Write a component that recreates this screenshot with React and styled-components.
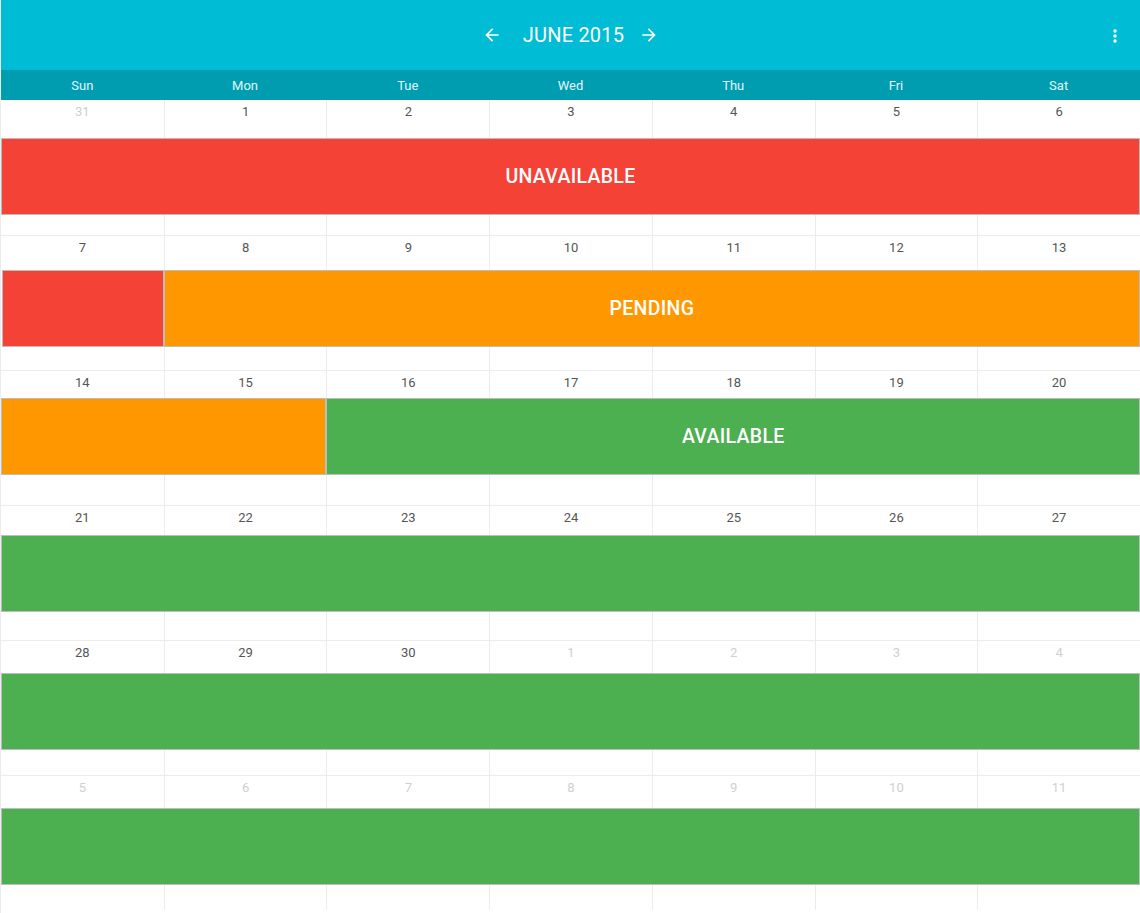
import React from "react";
import styled, { createGlobalStyle } from "styled-components";

const Global = createGlobalStyle`
  html, body { margin: 0; padding: 0; background: #fff; overflow: hidden; }
  body { font-family: Roboto, "Noto Sans", Arial, sans-serif; }
`;

const Page = styled.div`
  width: 1140px;
  height: 913px;
  box-sizing: border-box;
  border-left: 1px solid #ececec;
  overflow: hidden;
`;

const Toolbar = styled.header`
  height: 70px;
  background: #00bcd4;
  display: flex;
  align-items: center;
  justify-content: center;
  position: relative;
  color: #fff;
`;

const NavButton = styled.button`
  background: none;
  border: 0;
  padding: 0;
  width: 20px;
  height: 24px;
  display: flex;
  align-items: center;
  justify-content: center;
  color: #fff;
  cursor: pointer;
`;

const Title = styled.h1`
  margin: 0 15px 0 21px;
  font-size: 20px;
  font-weight: 400;
  letter-spacing: 0.2px;
  line-height: 24px;
`;

const MenuButton = styled(NavButton)`
  position: absolute;
  right: 13px;
  top: 24px;
  width: 24px;
`;

const DayHeader = styled.div`
  height: 30px;
  background: #009db1;
  display: grid;
  grid-template-columns: repeat(7, 1fr);
  align-items: center;
`;

const DayName = styled.div`
  text-align: center;
  color: #e0f7fa;
  font-size: 13px;
  padding-top: 1px;
`;

const Week = styled.div`
  position: relative;
  height: 135px;
  box-sizing: border-box;
  border-top: ${(p) => (p.$first ? "0" : "1px solid #ececec")};
  display: grid;
  grid-template-columns: repeat(7, 1fr);
`;

const DayCell = styled.div`
  border-left: ${(p) => (p.$first ? "0" : "1px solid #ececec")};
  text-align: center;
  font-size: 13px;
  line-height: 16px;
  padding-top: 4px;
  color: ${(p) => (p.$muted ? "#cfcfcf" : "#555")};
`;

const BandLayer = styled.div`
  position: absolute;
  left: 0;
  right: 0;
  top: ${(p) => p.$top}px;
  height: 77px;
  display: grid;
  grid-template-columns: repeat(7, 1fr);
`;

const Band = styled.div`
  grid-column: ${(p) => p.$start} / span ${(p) => p.$span};
  background: ${(p) => p.$color};
  border: 1px solid #bdbdbd;
  box-sizing: border-box;
  margin-left: ${(p) => p.$inset}px;
  display: flex;
  align-items: center;
  justify-content: center;
  color: #fff;
  font-size: 19.5px;
  font-weight: 500;
  letter-spacing: 0.3px;
`;

const RED = "#f44336";
const ORANGE = "#ff9800";
const GREEN = "#4caf50";

const days = ["Sun", "Mon", "Tue", "Wed", "Thu", "Fri", "Sat"];

const weeks = [
  {
    dates: [31, 1, 2, 3, 4, 5, 6],
    muted: [0],
    top: 38,
    bands: [{ start: 1, span: 7, color: RED, label: "UNAVAILABLE", inset: 0 }],
  },
  {
    dates: [7, 8, 9, 10, 11, 12, 13],
    muted: [],
    top: 34,
    bands: [
      { start: 1, span: 1, color: RED, label: "", inset: 1 },
      { start: 2, span: 6, color: ORANGE, label: "PENDING", inset: 0 },
    ],
  },
  {
    dates: [14, 15, 16, 17, 18, 19, 20],
    muted: [],
    top: 27,
    bands: [
      { start: 1, span: 2, color: ORANGE, label: "", inset: 0 },
      { start: 3, span: 5, color: GREEN, label: "AVAILABLE", inset: 0 },
    ],
  },
  {
    dates: [21, 22, 23, 24, 25, 26, 27],
    muted: [],
    top: 29,
    bands: [{ start: 1, span: 7, color: GREEN, label: "", inset: 0 }],
  },
  {
    dates: [28, 29, 30, 1, 2, 3, 4],
    muted: [3, 4, 5, 6],
    top: 32,
    bands: [{ start: 1, span: 7, color: GREEN, label: "", inset: 0 }],
  },
  {
    dates: [5, 6, 7, 8, 9, 10, 11],
    muted: [0, 1, 2, 3, 4, 5, 6],
    top: 32,
    bands: [{ start: 1, span: 7, color: GREEN, label: "", inset: 0 }],
  },
];

const ArrowLeft = () => (
  <svg width="20" height="20" viewBox="0 0 24 24" fill="#fff">
    <path d="M20 11H7.83l5.59-5.59L12 4l-8 8 8 8 1.41-1.41L7.83 13H20v-2z" />
  </svg>
);

const ArrowRight = () => (
  <svg width="20" height="20" viewBox="0 0 24 24" fill="#fff">
    <path d="M12 4l-1.41 1.41L16.17 11H4v2h12.17l-5.58 5.59L12 20l8-8z" />
  </svg>
);

const MoreVert = () => (
  <svg width="24" height="24" viewBox="0 0 24 24" fill="#fff">
    <circle cx="12" cy="7" r="1.7" />
    <circle cx="12" cy="12" r="1.7" />
    <circle cx="12" cy="17" r="1.7" />
  </svg>
);

export default function App() {
  return (
    <>
      <Global />
      <Page>
        <Toolbar>
          <NavButton aria-label="previous">
            <ArrowLeft />
          </NavButton>
          <Title>JUNE 2015</Title>
          <NavButton aria-label="next">
            <ArrowRight />
          </NavButton>
          <MenuButton aria-label="menu">
            <MoreVert />
          </MenuButton>
        </Toolbar>
        <DayHeader>
          {days.map((d) => (
            <DayName key={d}>{d}</DayName>
          ))}
        </DayHeader>
        {weeks.map((w, wi) => (
          <Week key={wi} $first={wi === 0}>
            {w.dates.map((d, i) => (
              <DayCell key={i} $first={i === 0} $muted={w.muted.includes(i)}>
                {d}
              </DayCell>
            ))}
            <BandLayer $top={w.top}>
              {w.bands.map((b, bi) => (
                <Band
                  key={bi}
                  $start={b.start}
                  $span={b.span}
                  $color={b.color}
                  $inset={b.inset}
                >
                  {b.label}
                </Band>
              ))}
            </BandLayer>
          </Week>
        ))}
      </Page>
    </>
  );
}
